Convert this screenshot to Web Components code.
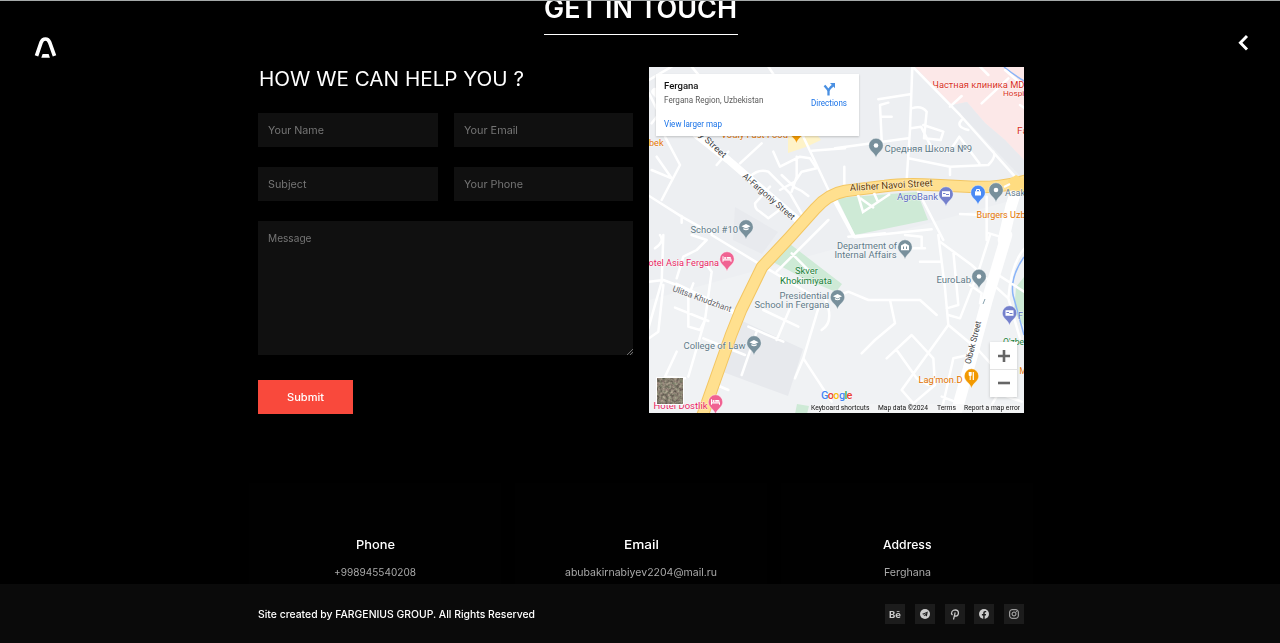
<!DOCTYPE html>
<html lang="en">
<head>
<meta charset="utf-8">
<title>Get in touch</title>
<style>
html,body{margin:0;background:#000}
body{height:643px;overflow:hidden;font-family:Inter,"Open Sans",sans-serif;color:#fff}
</style>
</head>
<body>
<contact-page></contact-page>
<script>
const define = (name, html, init) => {
  const t = document.createElement('template');
  t.innerHTML = html;
  customElements.define(name, class extends HTMLElement {
    constructor() {
      super();
      this.attachShadow({mode: 'open'}).append(t.content.cloneNode(true));
    }
    connectedCallback() { if (init) init.call(this, this.shadowRoot); }
  });
};

/* One line of text widened to a given measure. */
define('fit-text', `<style>:host{display:inline-block;white-space:nowrap;text-align:left}span{display:inline-block;transform-origin:0 50%}</style><span><slot></slot></span>`, function (r) {
  const s = r.querySelector('span'), w = +this.getAttribute('measure');
  this.style.width = w + 'px';
  s.style.transform = 'scaleX(' + w / s.getBoundingClientRect().width + ')';
});

define('site-logo', `<style>:host{display:block;width:24px;height:24px}svg{display:block}</style>
<svg width="24" height="24" viewBox="0 0 24 24"><path d="M3.500 19.800 8.200 6.200Q9.500 3 12.400 3t4.200 3.200L21.500 19.800" fill="none" stroke="#fff" stroke-width="3.700"/><path d="M9.600 18h6l1.300 3.800H8.300z" fill="#fff"/></svg>`);

define('menu-toggle', `<style>:host{display:block}svg{display:block}</style>
<svg width="14" height="20" viewBox="0 0 14 20"><path d="M11 3 4.400 9.800l6.600 6.800" fill="none" stroke="#fff" stroke-width="2.900"/></svg>`);

define('section-title', `<style>:host{display:flex;justify-content:center;height:35px;box-sizing:border-box}
h2{margin:0;font-size:26.500px;font-weight:600;line-height:15px;height:33px;width:194px;border-bottom:1.500px solid #fff}
</style><h2><fit-text measure="193">GET IN TOUCH</fit-text></h2>`);

define('text-field', `<style>:host{display:block;box-sizing:border-box;height:34px;background:#101010;color:#757575;font-size:10.500px;line-height:35px;padding:0 10px;position:relative}
:host([area]){height:134px}svg{display:none;position:absolute;right:0;bottom:0}:host([area]) svg{display:block}</style><slot></slot>
<svg width="6" height="6" viewBox="0 0 6 6"><path d="M0 6 6 0M3 6 6 3" stroke="#888" stroke-width=".8"/></svg>`);

define('submit-button', `<style>:host{display:block}button{display:block;border:0;margin:0;padding:0;width:95px;height:34px;background:#f9493c;color:#fff;font:500 10.500px Inter,sans-serif}</style><button><slot></slot></button>`);

define('contact-form', `<style>:host{display:block;width:375px}
h3{margin:0;font-size:19.700px;font-weight:400;line-height:24px;height:46px;padding-left:1px}
.grid{display:grid;grid-template-columns:180px 179px;gap:20px 16px}
.wide{grid-column:1/-1}submit-button{margin-top:25px}</style>
<h3><fit-text measure="265">HOW WE CAN HELP YOU ?</fit-text></h3>
<div class="grid">
<text-field><fit-text measure="56">Your Name</fit-text></text-field><text-field><fit-text measure="54">Your Email</fit-text></text-field>
<text-field><fit-text measure="38.500">Subject</fit-text></text-field><text-field><fit-text measure="59">Your Phone</fit-text></text-field>
<text-field area class="wide"><fit-text measure="43.500">Message</fit-text></text-field></div>
<submit-button><fit-text measure="37">Submit</fit-text></submit-button>`);

define('map-card', `<style>:host{display:flex;justify-content:space-between;box-sizing:border-box;width:203px;height:62px;background:#fff;padding:5px 12px 0 8px;font-family:Roboto,sans-serif;box-shadow:0 1px 2px #0003}
b,p,a{display:block;margin:0;white-space:nowrap}b{font-size:9.700px;font-weight:500;line-height:14px;color:#111}p{font-size:8.600px;line-height:15px;color:#5b5b5b}
a{font-size:8.600px;line-height:12px;color:#1a73e8}.v{margin-top:10px}.d{text-align:center;padding-top:3px}svg{display:block;margin:0 auto 1px}</style>
<div><b><fit-text measure="34.500">Fergana</fit-text></b><p><fit-text measure="99.500">Fergana Region, Uzbekistan</fit-text></p><a class="v"><fit-text measure="58">View larger map</fit-text></a></div>
<div class="d"><svg width="14" height="14" viewBox="0 0 14 14"><path d="M6.500 13.500V9.500Q6.500 8 5 6.500L2.500 3.500M6.500 9.500Q6.500 7 11 3.500" fill="none" stroke="#4a90e2" stroke-width="2.300"/><path d="M8 1h5v5.200z" fill="#4a90e2"/></svg><a><fit-text measure="36">Directions</fit-text></a></div>`);

define('zoom-control', `<style>:host{display:flex;flex-direction:column;width:27px;height:55px;background:#fff;box-shadow:0 1px 3px #0003}
i{flex:1;display:flex;align-items:center;justify-content:center}i+i{border-top:1px solid #e3e3e3}</style>
<i><svg width="12" height="12"><path d="M6 0v12M0 6h12" stroke="#666" stroke-width="2.600"/></svg></i><i><svg width="12" height="12"><path d="M0 5h12" stroke="#666" stroke-width="2.600"/></svg></i>`);

/* Marker glyphs, drawn around the centre of the pin head. */
const glyphs = {
  cap: '<path d="M-4.500-.800 0-3 4.500-.800 0 1.400z"/><path d="M-2.600 1v1.600Q0 4 2.600 2.600V1L0 2.200z"/>',
  dot: '<circle r="2.300"/>',
  card: '<path fill-rule="evenodd" d="M-4-2.800h8v5.600h-8zM-3-1h2.500v1H-3zM0 0h3v.900H0z"/>',
  bag: '<path d="M-3-1.200h6V3h-6z"/><path d="M-1.500-1v-2h3v2" fill="none" stroke="#fff"/>',
  bank: '<path fill-rule="evenodd" d="M-4-1.500 0-3.800l4 2.300V3.300h-8zM-2-.500v2.500h1V-.500zM1-.500v2.500h1V-.500z"/>',
  fork: '<path d="M-2.800-4v3q0 1 1 1V4h1V0q1 0 1-1v-3M1.200-4v8h1.200V-4z"/>',
  bed: '<path d="M-4.500-2.700h1v3h8v2.500h-1V1.400h-7v1.400h-1zM-.300-2h3.300q1.200 0 1.200 1.800H-.300z"/><circle cx="-1.900" cy="-1" r="1.100"/>'
};
const pins = [
  [746,227,'#78909c','cap'],[796.500,131,'#f29900','fork'],[876,145.500,'#78909c','dot'],[946,194,'#7480cc','card'],[978,192.500,'#4a8af4','bag'],
  [996,190,'#78909c','dot'],[905,247,'#78909c','bank'],[979,276.500,'#78909c','dot'],[1009.500,313,'#7480cc','card'],[971.500,376,'#f29900','fork'],
  [727,259,'#f06292','bed'],[837.500,297,'#78909c','cap'],[754,343,'#78909c','cap'],[715.500,402,'#f06292','bed']
];
const G='#5f7a88',O='#e37400',P='#e91e63',N='#188038',R='#d93025',I='#5c6bc0',D='#3c4043';
/* x, baseline, measure, colour, text, size, rotation */
const labels = [
  [690.500,233,47.500,G,'School #10',9.700],[884.500,151.500,87.500,G,'Средняя Школа №9',9.700],[932.500,87.500,92,R,'Частная клиника MD',9.700],[1003,95.500,24,R,'Hospit',8],[1017,134,11,R,'Fa',9.700],
  [649,146,14.500,O,'bek',9.700],[721,138,67,O,'Vodiy Fast Food',9.700],[897,200,41,I,'AgroBank',9.700],[1005,196,20,G,'Asak',9.700],[976.500,218,49,O,'Burgers Uzb',9.700],
  [837,249,60,G,'Department of',9.700],[834.500,258,62,G,'Internal Affairs',9.700],[936.500,283,34.500,G,'EuroLab',9.700],[795,274,23,N,'Skver',9.700],[780,283.500,52,N,'Khokimiyata',9.700],
  [779.500,298.500,49.500,G,'Presidential',9.700],[754.500,308,75,G,'School in Fergana',9.700],[683.500,349,62,G,'College of Law',9.700],[642,265.500,77,P,'Hotel Asia Fergana',9.700],
  [653.500,408.500,54,P,'Hotel Dostlik',9.700],[918.500,382.500,44,O,"Lag'mon.D",9.700],[1018,319,5,I,'F',9.700],[1003,345,21,N,"O'zbe",9.700],[1019.500,374,7,O,'M',9.700],
  [850,191,83,'#5f3a00','Alisher Navoi Street',9.700,-3.500],[742,177,66,D,'Al-Fargoniy Street',8.600,41],[697,134,36,D,'iy Street',8.600,43],
  [672,291,62,'#5f6368','Ulitsa Khudzhant',8.600,20],[970.500,364.500,44,D,'Oibek Street',8.600,-76]
];
const pinSvg = pins.map(([x,y,c,g]) => `<g transform="translate(${x} ${y})"><path fill="${c}" stroke="#fff" stroke-width=".400" d="M0 12.500C-1 7-7.200 5.500-7.200 0A7.200 7.200 0 1 1 7.200 0C7.200 5.500 1 7 0 12.500Z"/><g fill="#fff">${glyphs[g]}</g></g>`).join('');
const labelSvg = labels.map(([x,y,w,c,t,s,a]) => `<text x="${x}" y="${y}" textLength="${w}" lengthAdjust="spacingAndGlyphs" font-size="${s}" fill="${c}"${a?` transform="rotate(${a} ${x} ${y})"`:''}>${t}</text>`).join('');

define('city-map', `<style>:host{display:block;position:relative;width:375px;height:345.500px;overflow:hidden;background:#f0f2f4;font-family:Roboto,sans-serif}
svg{display:block}text{font-family:Roboto,sans-serif;paint-order:stroke;stroke:#fff9;stroke-width:1px;stroke-linejoin:round}
.r{fill:none;stroke:#fff;stroke-width:7.500;stroke-linejoin:round;stroke-linecap:round}.w{stroke-width:22}
map-card{position:absolute;left:7px;top:7px}zoom-control{position:absolute;left:341px;top:275px}
.legal{position:absolute;right:4px;bottom:0;left:162px;height:9px;display:flex;justify-content:space-between;font-size:6.600px;line-height:8px;color:#111;background:#f5f5f580}
.g text{font-size:11px;font-weight:500;stroke-width:1px}</style>
<svg width="375" height="346" viewBox="649 67 375 346">
<path d="M649 67h375v130L649 300z" fill="#edeff2"/><path d="M915 67h109v93l-19-20-20-17-18-21-15 3z" fill="#fce8e8"/><path d="M952 105l15-3 18 21 20 17 19 20v20z" fill="#e8eaee"/>
<path d="M788 136h30l3 4-15 7-18 6z" fill="#fef3c8"/>
<path d="M735 207l43 25-16 22-29-14z" fill="#e8eaee"/><path d="M740 320l63 29-15 47-65-24z" fill="#e7e9ed"/>
<path d="M837 198l80-6 11 28-73 15zM790 244l52 40-6 8-31-13-32-17zM797 404l12 2-2 8h-12zM1024 277l-8 10-2 25 10 14z" fill="#ceead6"/>
<path d="M1004 67q10 8 20 14M1024 257q-14 20-11 38l11 40" fill="none" stroke="#8ab4f8" stroke-width="1.500"/>
<g transform="translate(645 60) scale(.33333)"><g class="r">
<path class="w" d="M30 95 155 225 250 300 470 490"/><path d="M12 60 80 20M140 20l25 30M370 20l40 60 60 140 90 190 65 120"/><path d="M60 230 105 315 50 420M0 400 110 470 200 520M35 290 80 355 20 330M215 315l35-40M285 310l65-60M500 272l100-7M110 468v20"/>
<path d="M315 350q25-25 55-15l65 65 40 70M385 275l20 45 60-30 30 5 20 30-45 10-20 30-45 25M410 345l40 38 20 10 20 15M455 290v60l-15 45M375 380l-45 50q0 20 15 25l25 20 40-30"/><path d="M12 100l60 120M75 120 20 190"/></g></g>
<g transform="translate(835 60) scale(.33333)"><g class="r">
<path d="M232 20 225 210 215 360M235 22 375 165 540 350M0 265 220 235M130 118 225 103M160 128 135 135 140 240M140 170h30M230 145q30-10 45 10l-8 80 50 5 8-25-60-20M228 205l30-5 30 60 55 15 30-45 60 80M220 295l125 25 115-5q25-25 15-40M345 320v25M400 210q-40-10-20-30M345 140l35-32M440 130l80-75M435 20l25 25M510 30 575 85M555 135l15 10M0 415 60 532 290 508M245 385 325 540M455 410v130M375 462l70 3M455 518l40 12M28 320v60"/><path class="w" d="M550 370 528 440 505 540" style="stroke-width:34"/></g></g>
<g transform="translate(645 235) scale(.33333)"><g class="r">
<path d="M200 0 340 85 500 180M550 -45 395 110M440 55 500 115M45 0Q60 20 30 40M140 0l45 15-30 30-40 20-20 65M55 0 50 140 10 280M12 140 55 135 95 150M185 90l15 20-20 145-50 170M12 310 40 290 55 150M145 145l-15 40v90l35 10 15-30M90 218 190 258M310 275 415 320M435 220 395 315M355 225 460 275M175 310 300 360M335 290 290 420M215 450l35 15M95 350 60 425 120 430M520 220 490 320 475 370 450 430M475 370 560 500M540 190q30 70-10 95"/><path d="M95 150 268 232" style="stroke-width:14"/></g></g>
<g transform="translate(835 235) scale(.33333)"><g class="r">
<path d="M15 180 40 170 100 195 255 195 305 240M165 195 180 265 120 315 80 355M155 370 230 300 295 370 300 450 235 505 200 465 340 270 330 160 310 0M185 345 245 430 280 450M210 0l50 5v35M255 80h60M230 40h40M315 20 410 90 520 190M465 0 430 110 375 250 340 240M355 50 370 210 335 220M490 120 567 170M340 270 430 345 480 400M405 150l35 25-5 30M320 525 335 460 355 370 400 360M320 485l40 15M470 510l20-35 70 25M40 5 150-5M520 190q10-120 60-160M520 190l35 120"/><path d="M515 0 455 200 412 360 360 545" style="stroke-width:34"/></g></g>
<g fill="none" stroke-linejoin="round"><path d="M702 417 731 335 741 310 762 267 790 237 815 209Q828 194 845 191L885 186Q905 183 935 185L975 187Q1000 188 1028 180" stroke="#f3c662" stroke-width="12.500"/><path d="M702 417 731 335 741 310 762 267 790 237 815 209Q828 194 845 191L885 186Q905 183 935 185L975 187Q1000 188 1028 180" stroke="#ffe08f" stroke-width="10.500"/></g>
<path d="M1008 180l8-5 8 4v13l-14-2z" fill="#ffdc80"/><path d="M1004 187l6-3" stroke="#fff" stroke-width="2"/>
<path d="M858 195l5 17 27-18M874 193l4 9M860 198l14 10" fill="none" stroke="#fff" stroke-width="2.600"/><path d="M983 304l2-5" stroke="#8aa4b0"/>
${labelSvg}${pinSvg}
<g class="g"><text x="821" y="398.500" textLength="31.500"><tspan fill="#4285f4">G</tspan><tspan fill="#ea4335">o</tspan><tspan fill="#fbbc05">o</tspan><tspan fill="#4285f4">g</tspan><tspan fill="#34a853">l</tspan><tspan fill="#ea4335">e</tspan></text></g>
<filter id="n" x="0" y="0" width="1" height="1" color-interpolation-filters="sRGB"><feTurbulence type="fractalNoise" baseFrequency=".35" numOctaves="3"/><feColorMatrix values=".5 .2 0 0 .18 .4 .3 0 0 .15 .4 .2 0 0 .14 0 0 0 0 1"/></filter>
<rect x="656" y="377" width="28" height="28" rx="1" fill="#fff"/><rect x="657.500" y="378.500" width="25.500" height="25" fill="#8b857a" filter="url(#n)"/>
</svg>
<map-card></map-card><zoom-control></zoom-control>
<div class="legal"><fit-text measure="58.500">Keyboard shortcuts</fit-text><fit-text measure="50">Map data ©2024</fit-text><fit-text measure="19">Terms</fit-text><fit-text measure="56">Report a map error</fit-text></div>`);

define('info-card', `<style>:host{display:flex;flex-direction:column;align-items:center;box-sizing:border-box;width:252px;height:101px;background:#010101;padding-top:53px}
h4{margin:0;font-size:12px;font-weight:500;line-height:18px}p{margin:11px 0 0;font-size:10.500px;line-height:15px;color:#aaa}</style>
<h4><slot name="title"></slot></h4><p><slot></slot></p>`);

define('social-link', `<style>:host{display:flex;align-items:center;justify-content:center;width:20px;height:20px;background:#1c1c1c;color:#ccc;font-size:9px;font-weight:700}</style><slot></slot>`);

define('site-footer', `<style>:host{display:flex;justify-content:space-between;align-items:center;box-sizing:border-box;height:59px;background:#0a0a0a;padding:1px 256px 0 258px;font-size:10.500px;font-weight:500}
nav{display:flex;gap:9.700px}svg{display:block}</style>
<fit-text measure="277">Site created by FARGENIUS GROUP. All Rights Reserved</fit-text>
<nav><social-link><fit-text measure="12">Bē</fit-text></social-link>
<social-link><svg width="10" height="10" viewBox="0 0 10 10"><circle cx="5" cy="5" r="5" fill="#ccc"/><path d="M1.900 4.900 7.800 2.600 6.900 7.600 5 6.300 4 7.200 3.700 5.600z" fill="#1c1c1c"/><path d="M3.800 5.600 6.700 3.700 4.700 6z" fill="#ccc"/></svg></social-link>
<social-link><svg width="10" height="11" viewBox="0 0 10 11"><path d="M2.500 6.200Q.8 4.500 2 2.500 3.200.8 5.300.8 8.500 1 8.500 3.900 8.300 7 6 7.100 4.800 7.100 4.500 6.200M5.200 3.300 3.500 10.500" fill="none" stroke="#ccc" stroke-width="1.200"/></svg></social-link>
<social-link><svg width="10" height="10" viewBox="0 0 10 10"><circle cx="5" cy="5" r="5" fill="#ccc"/><path d="M4.200 10V6.400H2.900V4.900h1.300V3.800Q4.200 1.900 6 1.900l1.200.1v1.300h-.7q-.8 0-.8.8v.8h1.400l-.3 1.500H5.700V10z" fill="#1c1c1c"/></svg></social-link>
<social-link><svg width="10" height="10" viewBox="0 0 10 10" fill="none" stroke="#bbb"><rect x=".7" y=".7" width="8.600" height="8.600" rx="2.300"/><circle cx="5" cy="5" r="2"/><circle cx="7.500" cy="2.500" r=".3"/></svg></social-link></nav>`);

define('contact-page', `<style>:host{display:flex;flex-direction:column;position:relative;height:643px;box-sizing:border-box;background:#000;border-top:1px solid #a5a9a9;overflow:hidden}
site-logo{position:absolute;left:33px;top:35px}menu-toggle{position:absolute;left:1236px;top:32px}
section-title{padding-left:2px;flex:none}
.main{display:flex;gap:16px;margin:31px 0 0 258px;height:347px}city-map{flex:none}
.cards{display:flex;gap:14px;margin:69px 0 0 249px;flex:none}site-footer{margin-top:auto;flex:none}</style>
<section-title></section-title>
<div class="main"><contact-form></contact-form><city-map></city-map></div>
<div class="cards">
<info-card><fit-text slot="title" measure="39">Phone</fit-text><fit-text measure="82">+998945540208</fit-text></info-card>
<info-card><fit-text slot="title" measure="35">Email</fit-text><fit-text measure="152">abubakirnabiyev2204@mail.ru</fit-text></info-card>
<info-card><fit-text slot="title" measure="48.500">Address</fit-text><fit-text measure="47">Ferghana</fit-text></info-card></div>
<site-footer></site-footer><site-logo></site-logo><menu-toggle></menu-toggle>`);
</script>
</body>
</html>
